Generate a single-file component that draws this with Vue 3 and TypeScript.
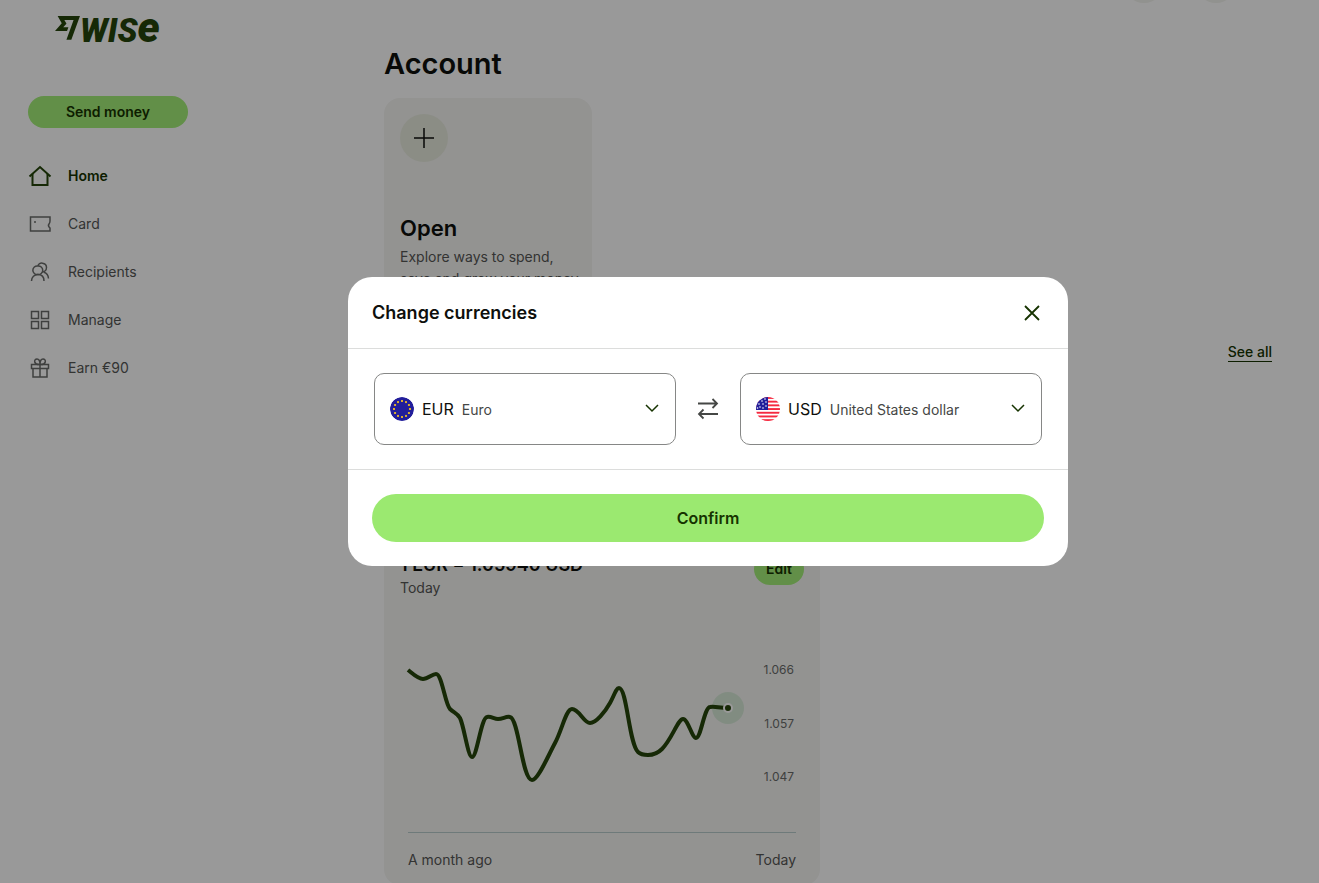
<script setup lang="ts">
import { computed, ref } from 'vue'

interface NavItem {
  label: string
  icon: string[]
  active?: boolean
}

const navItems: NavItem[] = [
  { label: 'Home', icon: ['M1.5 12.5 L12 3 L22.5 12.5', 'M4.5 10 V21 H19.5 V10'], active: true },
  {
    label: 'Card',
    icon: ['M22 5 H2.5 V19 H22 V16 C20.2 14.5 20.2 13 21 12 C21.8 11 22 10.5 22 9 Z', 'M6 10 H8'],
  },
  {
    label: 'Recipients',
    icon: [
      'M3.5 21 C3.5 17 6.5 14.5 9.8 14.5 C13.5 14.5 16 17 16 21',
      'M9.8 6 A4.3 4.3 0 1 0 9.8 14.5 A4.3 4.3 0 1 0 9.8 6 Z',
      'M10 5.8 C10.5 1.8 18.5 2.2 18.5 7.5 C18.5 10 16.5 12 14 12',
      'M16 12.3 C18.8 13.2 20.3 15.5 20.5 18.5',
    ],
  },
  {
    label: 'Manage',
    icon: ['M3.5 3.5 H10.5 V10.5 H3.5 Z', 'M13.5 3.5 H20.5 V10.5 H13.5 Z', 'M3.5 13.5 H10.5 V20.5 H3.5 Z', 'M13.5 13.5 H20.5 V20.5 H13.5 Z'],
  },
  {
    label: 'Earn €90',
    icon: [
      'M3.5 8.5 H20.5 V12.5 H3.5 Z',
      'M5 12.5 V21 H19 V12.5',
      'M12 8.5 V21',
      'M12 8.5 C5.5 9 5.5 3 9 3 C11.5 3 12 5.5 12 8.5 C12 5.5 12.5 3 15 3 C18.5 3 18.5 9 12 8.5',
    ],
  },
]

const currencies: Record<string, string> = {
  EUR: 'Euro',
  USD: 'United States dollar',
}

const source = ref('EUR')
const target = ref('USD')
const fields = computed(() => [
  { id: 'source', label: 'From currency', model: source.value },
  { id: 'target', label: 'To currency', model: target.value },
])

function choose(id: string, event: Event): void {
  const value = (event.target as HTMLSelectElement).value
  if (id === 'source') source.value = value
  else target.value = value
}

function swap(): void {
  const previous = source.value
  source.value = target.value
  target.value = previous
}

const euStars = Array.from({ length: 12 }, (_, i) => {
  const angle = (i * Math.PI) / 6
  return { x: 12 + 8 * Math.sin(angle), y: 12 - 8 * Math.cos(angle) }
})
const usStars = [
  [3, 7], [6, 4], [9, 2], [10, 5], [7, 7], [4, 10], [10, 9], [7, 11], [1.5, 11],
]
const rateLabels = ['1.066', '1.057', '1.047']
</script>

<template>
  <div class="page">
    <aside class="sidebar">
      <a class="logo" href="#" aria-label="Wise">
        <svg width="25" height="30" viewBox="0 0 25 30">
          <path
            transform="translate(0 3.4) scale(1.04)"
            d="M6.488 7.469 0 15.05h11.585l1.301-3.576H7.922l3.033-3.507.01-.092L8.993 4.48h8.873l-6.878 18.925h4.706L24 .595H2.543l3.945 6.874Z"
          />
        </svg>
        <span class="wordmark">WIS<span class="wordmark-e">e</span></span>
      </a>
      <button class="pill send" type="button">Send money</button>
      <nav class="nav">
        <a v-for="item in navItems" :key="item.label" href="#" class="nav-item" :class="{ active: item.active }">
          <svg width="24" height="24" viewBox="0 0 24 24"><path v-for="d in item.icon" :key="d" :d="d" /></svg>
          <span>{{ item.label }}</span>
        </a>
      </nav>
    </aside>

    <main class="main">
      <div class="topbar"><span class="round"></span><span class="round"></span></div>
      <h1>Account</h1>
      <a class="open-card" href="#">
        <span class="plus">
          <svg width="24" height="24" viewBox="0 0 24 24"><path d="M12 2 V22 M2 12 H22" /></svg>
        </span>
        <strong>Open</strong>
        <span class="open-text">Explore ways to spend, save and grow your money</span>
      </a>
      <div class="activity"><a class="see-all" href="#">See all</a></div>
      <section class="rate-card">
        <header class="rate-head">
          <div>
            <h2>1 EUR = 1.05940 USD</h2>
            <p>Today</p>
          </div>
          <button class="pill edit" type="button">Edit</button>
        </header>
        <div class="chart">
          <svg width="336" height="182" viewBox="0 0 336 182">
            <circle class="halo" cx="320" cy="58" r="16" />
            <path
              d="M0 20 C5 24 10 29 15 29 C20 29 24 24 28 24 C34 24 37 54 42 59 C46 63 49 63 52 68 C56 76 60 107 64 107 C69 107 73 68 79 67 C83 66 86 69 90 69 C95 69 98 66 102 67 C111 69 114 130 124 130 C130 130 139 108 147 93 C154 80 158 59 164 59 C171 59 176 73 182 73 C188 73 197 62 202 53 C206 46 208 38 211 38 C219 38 221 94 230 102 C233 105 236 105 240 105 C246 105 250 103 254 99 C264 89 270 69 275 69 C280 69 284 88 288 88 C293 88 296 58 302 57 C307 56 311 58 320 58"
            />
            <circle class="point" cx="320" cy="58" r="4" />
          </svg>
          <div class="scale"><span v-for="label in rateLabels" :key="label">{{ label }}</span></div>
        </div>
        <div class="period"><span>A month ago</span><span>Today</span></div>
      </section>
    </main>

    <div class="overlay">
      <div class="modal" role="dialog" aria-modal="true" aria-labelledby="modal-title">
        <header class="modal-head">
          <h2 id="modal-title">Change currencies</h2>
          <button class="icon-button" type="button" aria-label="Close">
            <svg width="24" height="24" viewBox="0 0 24 24"><path class="close" d="M5 5 L19 19 M19 5 L5 19" /></svg>
          </button>
        </header>
        <div class="modal-body">
          <template v-for="(field, index) in fields" :key="field.id">
            <button v-if="index === 1" class="icon-button swap" type="button" aria-label="Swap currencies" @click="swap">
              <svg width="24" height="24" viewBox="0 0 24 24">
                <path d="M2 6.5 H21 M16.5 2 L21 6.5 L16.5 11 M22 17 H3 M7.5 12.5 L3 17 L7.5 21.5" />
              </svg>
            </button>
            <label class="field" :for="field.id">
              <svg v-if="field.model === 'EUR'" class="flag" width="24" height="24" viewBox="0 0 24 24">
                <circle cx="12" cy="12" r="12" fill="#221e9b" />
                <rect v-for="(s, i) in euStars" :key="i" :x="s.x - 1" :y="s.y - 1" width="2" height="2" fill="#d9ab32" />
              </svg>
              <svg v-else class="flag" width="24" height="24" viewBox="0 0 24 24">
                <rect width="24" height="24" fill="#fff" />
                <rect v-for="n in 7" :key="n" y="0" :transform="`translate(0 ${(n - 1) * 3.7})`" width="24" height="1.9" fill="#f5293f" />
                <rect width="12" height="13" fill="#221e9b" />
                <circle v-for="(s, i) in usStars" :key="i" :cx="s[0]" :cy="s[1]" r="0.8" fill="#fff" />
              </svg>
              <span class="code">{{ field.model }}</span>
              <select :id="field.id" :value="field.model" :aria-label="field.label" @change="choose(field.id, $event)">
                <option v-for="(name, code) in currencies" :key="code" :value="code">{{ name }}</option>
              </select>
              <svg class="chevron" width="16" height="16" viewBox="0 0 16 16"><path d="M2 4 L8 10 L14 4" /></svg>
            </label>
          </template>
        </div>
        <footer class="modal-foot"><button class="confirm" type="button">Confirm</button></footer>
      </div>
    </div>
  </div>
</template>

<style>
body {
  margin: 0;
  background: #fff;
}
</style>

<style scoped>
.page,
.page * {
  box-sizing: border-box;
}
.page {
  display: flex;
  height: 100vh;
  overflow: hidden;
  font-family: Inter, "Liberation Sans", sans-serif;
  font-size: 14px;
  line-height: 22px;
  color: #555755;
}
h1,
h2,
p {
  margin: 0;
}
a {
  color: inherit;
  text-decoration: none;
}
button {
  padding: 0;
  border: 0;
  font: inherit;
  cursor: pointer;
}
svg {
  display: block;
  flex: none;
}
path {
  fill: none;
  stroke: currentColor;
  stroke-width: 1.5;
}
.sidebar {
  flex: none;
  width: 384px;
  padding: 12px 28px;
}
.logo {
  display: flex;
  height: 30px;
  margin-left: 27px;
  color: #25450a;
}
.logo path {
  fill: currentColor;
  stroke: none;
}
.wordmark {
  font-family: Roboto, "Liberation Sans", sans-serif;
  font-size: 33px;
  line-height: 32px;
  font-weight: 900;
  font-style: italic;
}
.wordmark-e {
  font-size: 42px;
}
.pill {
  height: 32px;
  border-radius: 16px;
  background: #a3ee78;
  color: #163300;
  font-weight: 600;
}
.send {
  width: 160px;
  margin-top: 54px;
}
.nav {
  display: flex;
  flex-direction: column;
  margin-top: 24px;
}
.nav-item {
  display: flex;
  align-items: center;
  gap: 16px;
  height: 48px;
}
.nav-item path {
  stroke: #6a6c6a;
}
.nav-item.active {
  color: #163300;
  font-weight: 600;
}
.nav-item.active path {
  stroke: #25450a;
  stroke-width: 2;
}
.main {
  flex: 1;
  display: flex;
  flex-direction: column;
  padding-right: 47px;
}
.topbar {
  display: flex;
  flex: none;
  justify-content: flex-end;
  align-items: flex-end;
  gap: 32px;
  height: 3px;
  padding-right: 36px;
  overflow: hidden;
}
.round {
  flex: none;
  width: 40px;
  height: 40px;
  border-radius: 50%;
  background: #f2f3ee;
}
h1 {
  margin-top: 43px;
  color: #0e0f0c;
  font-size: 29px;
  line-height: 36px;
  font-weight: 600;
}
.open-card {
  flex: none;
  display: flex;
  flex-direction: column;
  width: 208px;
  height: 208px;
  margin-top: 16px;
  padding: 16px;
  border-radius: 16px;
  background: #f5f5f2;
}
.plus {
  flex: none;
  display: grid;
  place-items: center;
  width: 48px;
  height: 48px;
  border-radius: 50%;
  background: #e8ebde;
  color: #0e0f0c;
}
.open-card strong {
  margin-top: 52px;
  color: #0e0f0c;
  font-size: 22px;
  line-height: 28px;
  font-weight: 600;
}
.open-text {
  width: 184px;
  margin-top: 4px;
}
.activity {
  display: flex;
  flex: none;
  justify-content: flex-end;
  margin-top: 36px;
}
.see-all {
  border-bottom: 1px solid #163300;
  color: #163300;
  font-weight: 500;
  line-height: 19px;
}
.rate-card {
  flex: none;
  width: 436px;
  margin-top: 175px;
  padding: 16px 16px 14px;
  border-radius: 16px;
  background: #f5f5f2;
}
.rate-head {
  display: flex;
  justify-content: space-between;
  align-items: flex-start;
}
.rate-head h2 {
  color: #0e0f0c;
  font-size: 18px;
  line-height: 24px;
  font-weight: 600;
}
.edit {
  width: 50px;
}
.chart {
  display: flex;
  margin: 51px 8px 0;
  border-bottom: 1px solid #b7cccb;
  color: #25450a;
}
.chart svg {
  overflow: visible;
}
.chart path {
  stroke-width: 4;
}
.halo {
  fill: #d8ead8;
}
.point {
  fill: currentColor;
  stroke: #fff;
  stroke-width: 2;
}
.scale {
  flex: 1;
  display: flex;
  flex-direction: column;
  justify-content: space-between;
  height: 127px;
  margin-top: 10px;
  padding-right: 2px;
  color: #6a6c6a;
  font-size: 12px;
  line-height: 20px;
  text-align: right;
}
.period {
  display: flex;
  justify-content: space-between;
  margin: 16px 8px 0;
}
.overlay {
  position: fixed;
  inset: 0;
  display: grid;
  place-items: center;
  padding: 0 0 40px 97px;
  background: rgba(0, 0, 0, 0.4);
}
.modal {
  width: 100%;
  max-width: 720px;
  border-radius: 24px;
  background: #fff;
}
.modal-head {
  display: flex;
  align-items: center;
  justify-content: space-between;
  height: 72px;
  padding: 0 24px;
  border-bottom: 1px solid #dcdddc;
}
.modal-head h2 {
  color: #0e0f0c;
  font-size: 18px;
  line-height: 24px;
  font-weight: 600;
}
.icon-button {
  background: none;
  color: #454745;
}
.close {
  color: #163300;
  stroke-width: 1.8;
}
.swap path {
  stroke-width: 1.8;
}
.modal-body {
  display: grid;
  grid-template-columns: 1fr 64px 1fr;
  align-items: center;
  justify-items: center;
  padding: 24px 26px;
  border-bottom: 1px solid #dcdddc;
}
.field {
  display: flex;
  align-items: center;
  gap: 8px;
  width: 100%;
  height: 72px;
  padding: 0 15px;
  border: 1px solid #868786;
  border-radius: 10px;
}
.flag {
  border-radius: 50%;
}
.code {
  color: #0e0f0c;
  font-size: 16px;
}
select {
  flex: 1;
  min-width: 0;
  height: 24px;
  padding: 2px 0 0;
  border: 0;
  appearance: none;
  background: none;
  color: #454745;
  font: inherit;
}
.chevron {
  color: #163300;
  pointer-events: none;
}
.modal-foot {
  padding: 24px;
}
.confirm {
  display: block;
  width: 100%;
  height: 48px;
  border-radius: 24px;
  background: #9be970;
  color: #163300;
  font-size: 16px;
  font-weight: 600;
}
</style>
